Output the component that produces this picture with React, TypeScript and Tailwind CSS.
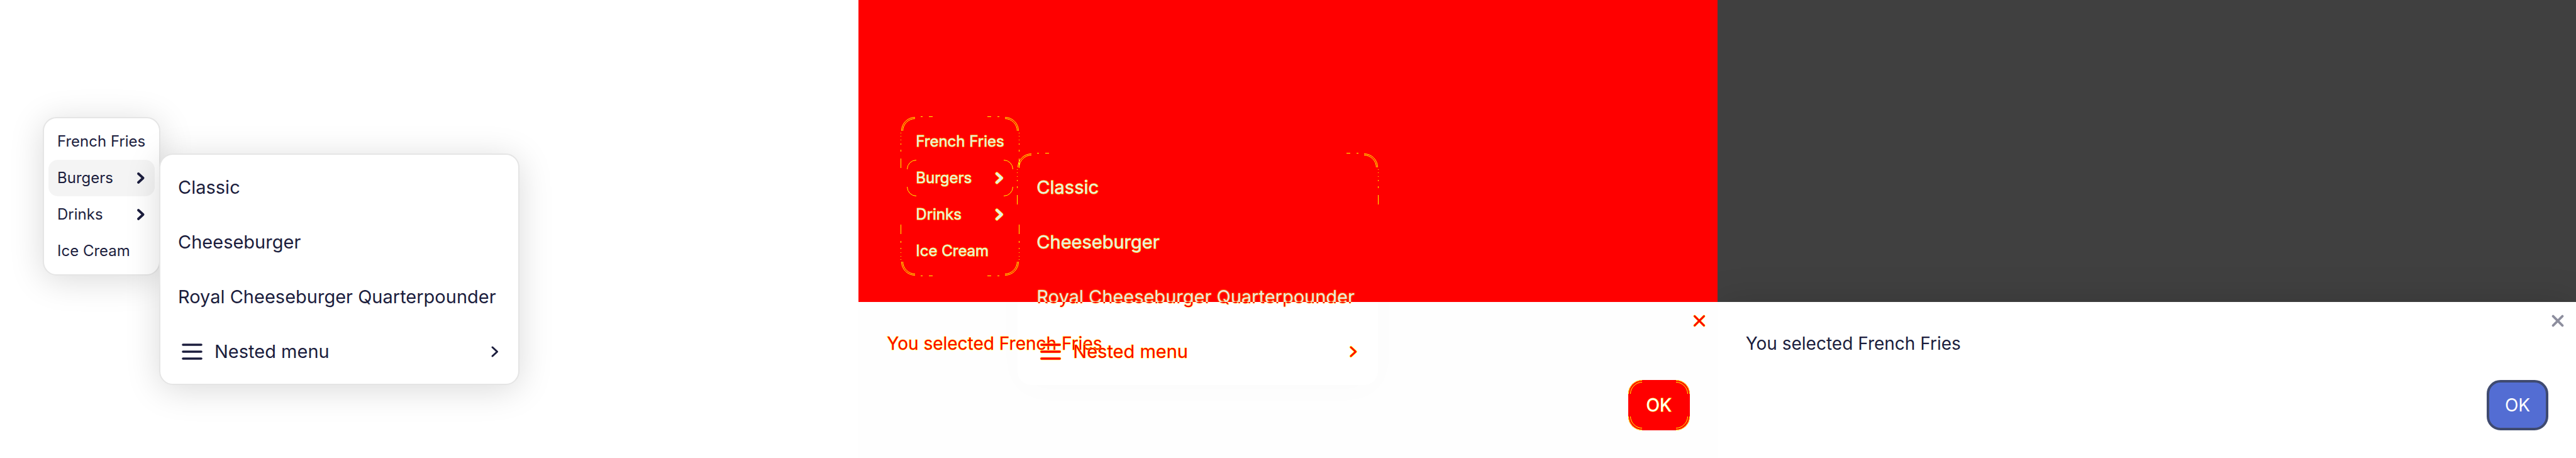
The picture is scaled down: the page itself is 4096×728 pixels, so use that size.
import React from "react";

type Tone = "plain" | "diff";

const DIFF_LIGHT = "text-[#e8e8e8] [-webkit-text-stroke:1px_#ffff00] [paint-order:stroke_fill]";
const DIFF_RED = "text-[#ff0000] [-webkit-text-stroke:1px_#ffff00] [paint-order:stroke_fill]";
const DIFF_SPLIT =
  "bg-[linear-gradient(#e8e8e8_52px,#ff0000_52px)] bg-clip-text text-transparent [filter:drop-shadow(0_0_1px_#ffff00)]";

function Chevron({ tone, red }: { tone: Tone; red?: boolean }) {
  const fill = tone === "plain" ? "#1b1d3d" : red ? "#ff0000" : "#e8e8e8";
  const d = "M2 2 L9.6 9 L2 16";
  return (
    <svg className="h-[18px] w-[12px] shrink-0 overflow-visible" viewBox="0 0 12 18" fill="none" strokeLinecap="round" strokeLinejoin="round" aria-hidden="true">
      {tone === "diff" && <path d={d} stroke="#ffff00" strokeWidth={red ? 4.4 : 5.2} />}
      <path d={d} stroke={fill} strokeWidth={red ? 3 : 3.9} />
    </svg>
  );
}

function Bars({ tone }: { tone: Tone }) {
  const d = "M2 2 H31 M2 13 H31 M2 24 H31";
  return (
    <svg className="mr-[19px] ml-[6px] h-[26px] w-[33px] shrink-0 overflow-visible" viewBox="0 0 33 26" fill="none" strokeLinecap="round" aria-hidden="true">
      {tone === "diff" && <path d={d} stroke="#ffff00" strokeWidth="4.6" />}
      <path d={d} stroke={tone === "plain" ? "#1b1d3d" : "#ff0000"} strokeWidth="3.6" />
    </svg>
  );
}

function Corners({ w, h, r, gap, dashes, topOnly }: { w: number; h: number; r: number; gap?: number; dashes?: boolean; topOnly?: boolean }) {
  const places = [`translate(0 0)`, `translate(${w} 0) scale(-1 1)`];
  if (!topOnly) places.push(`translate(0 ${h}) scale(1 -1)`, `translate(${w} ${h}) scale(-1 -1)`);
  return (
    <svg className="pointer-events-none absolute top-0 left-0 overflow-visible" width={w} height={h} fill="none" stroke="#ffff00" strokeWidth="1" aria-hidden="true">
      {places.map((t) => (
        <g key={t} transform={t}>
          <path d={`M0.5 ${r} A${r - 0.5} ${r - 0.5} 0 0 1 ${r} 0.5`} />
          {gap && <path d={`M${gap + 0.5} ${r} A${r - gap} ${r - gap} 0 0 1 ${r} ${gap + 0.5}`} />}
          {dashes && <path d="M31 -0.5h3 M44 -0.5h6 M-0.5 25v1 M-0.5 30v1 M-0.5 36v1 M-0.5 42v2 M-0.5 52v3 M-0.5 66v15" />}
        </g>
      ))}
    </svg>
  );
}

function SmallItem({ label, tone, nested, active }: { label: string; tone: Tone; nested?: boolean; active?: boolean }) {
  return (
    <li className="relative">
      <button
        type="button"
        className={`flex h-[58px] w-full items-center justify-between rounded-[15px] pr-[16px] pl-[14px] text-[24px] whitespace-nowrap ${active && tone === "plain" ? "bg-[#f4f4f4]" : ""}`}
      >
        <span className={tone === "diff" ? DIFF_LIGHT : ""}>{label}</span>
        {nested && <Chevron tone={tone} />}
      </button>
      {active && tone === "diff" && <Corners w={169} h={58} r={15} />}
    </li>
  );
}

function LargeItem({ label, tone, look, icon }: { label: string; tone: Tone; look: string; icon?: boolean }) {
  return (
    <li>
      <button type="button" className="flex h-[87px] w-full items-center pr-[24px] pl-[21px] text-[29px] leading-[87px] whitespace-nowrap">
        {icon && <Bars tone={tone} />}
        <span className={tone === "diff" ? look : ""}>{label}</span>
        {icon && (
          <span className="ml-auto flex">
            <Chevron tone={tone} red />
          </span>
        )}
      </button>
    </li>
  );
}

function Menus({ tone }: { tone: Tone }) {
  const surface =
    tone === "plain"
      ? "border-[#e5e5e5] bg-white bg-clip-padding shadow-[0_7px_54px_rgba(0,0,0,0.15)]"
      : "border-transparent";
  return (
    <nav className="flex items-start pt-[186px] pl-[68px] text-[#1b1d3d]">
      <ul className={`relative w-[187px] rounded-[22px] border-2 px-[7px] py-[8px] ${surface}`}>
        <SmallItem tone={tone} label="French Fries" />
        <SmallItem tone={tone} label="Burgers" nested active />
        <SmallItem tone={tone} label="Drinks" nested />
        <SmallItem tone={tone} label="Ice Cream" />
        {tone === "diff" && (
          <li aria-hidden="true" className="absolute -top-[2px] -left-[2px]">
            <Corners w={187} h={252} r={22} gap={2} dashes />
          </li>
        )}
      </ul>
      <ul className={`relative mt-[58px] -ml-[2px] w-[573px] rounded-[22px] border-2 px-[7px] py-[8px] ${surface}`}>
        <LargeItem tone={tone} label="Classic" look={DIFF_LIGHT} />
        <LargeItem tone={tone} label="Cheeseburger" look={DIFF_LIGHT} />
        <LargeItem tone={tone} label="Royal Cheeseburger Quarterpounder" look={DIFF_SPLIT} />
        <LargeItem tone={tone} label="Nested menu" look={DIFF_RED} icon />
        {tone === "diff" && (
          <li aria-hidden="true" className="absolute -top-[2px] -left-[2px]">
            <Corners w={573} h={368} r={22} gap={2} dashes topOnly />
          </li>
        )}
      </ul>
    </nav>
  );
}

function Dialog({ tone }: { tone: Tone }) {
  const diff = tone === "diff";
  return (
    <div className={`relative overflow-hidden ${diff ? "bg-[#fefefe]" : "bg-white shadow-[0_0_54px_rgba(0,0,0,0.15)]"}`}>
      {diff && (
        <div aria-hidden="true" className="absolute -top-[236px] left-[253px] h-[368px] w-[573px] rounded-[22px] bg-white shadow-[0_7px_54px_rgba(0,0,0,0.015)]" />
      )}
      <header className="relative flex h-[46px] justify-end pt-[20px] pr-[19px]">
        <button type="button" aria-label="Close" className="size-[20px]">
          <svg className="size-[20px] overflow-visible" viewBox="0 0 20 20" fill="none" strokeLinecap="round" aria-hidden="true">
            {diff && <path d="M2.6 2.6 L17.4 17.4 M17.4 2.6 L2.6 17.4" stroke="#ffff00" strokeWidth="4" />}
            <path d="M2.6 2.6 L17.4 17.4 M17.4 2.6 L2.6 17.4" stroke={diff ? "#ff0000" : "#8d8e9e"} strokeWidth={diff ? 3 : 3.8} />
          </svg>
        </button>
      </header>
      <p className="relative px-[45px] text-[28px] leading-[40px] text-[#1b1d3d]">
        <span className={diff ? DIFF_RED : ""}>You selected French Fries</span>
      </p>
      <footer className="relative flex justify-end px-[44px] pt-[38px] pb-[44px]">
        <button
          type="button"
          className={`relative h-[80px] w-[98px] rounded-[22px] text-[28px] text-white ${diff ? "bg-[#ff0000]" : "border-4 border-[#3f4a70] bg-[#536dd3]"}`}
        >
          <span className={diff ? "[-webkit-text-stroke:1px_#ffff00] [paint-order:stroke_fill]" : ""}>OK</span>
          {diff && <Corners w={98} h={80} r={22} gap={3} />}
        </button>
      </footer>
    </div>
  );
}

export default function App() {
  return (
    <main className="grid min-h-screen grid-cols-3 bg-white font-['Inter',sans-serif]">
      <section className="overflow-hidden bg-white">
        <Menus tone="plain" />
      </section>
      <section className="relative flex flex-col overflow-hidden">
        <div className="flex-1 bg-[#ff0000]" />
        <Dialog tone="diff" />
        <div className="absolute inset-x-0 top-0">
          <Menus tone="diff" />
        </div>
      </section>
      <section className="flex flex-col overflow-hidden">
        <div className="flex-1 bg-[#404040]" />
        <Dialog tone="plain" />
      </section>
    </main>
  );
}
